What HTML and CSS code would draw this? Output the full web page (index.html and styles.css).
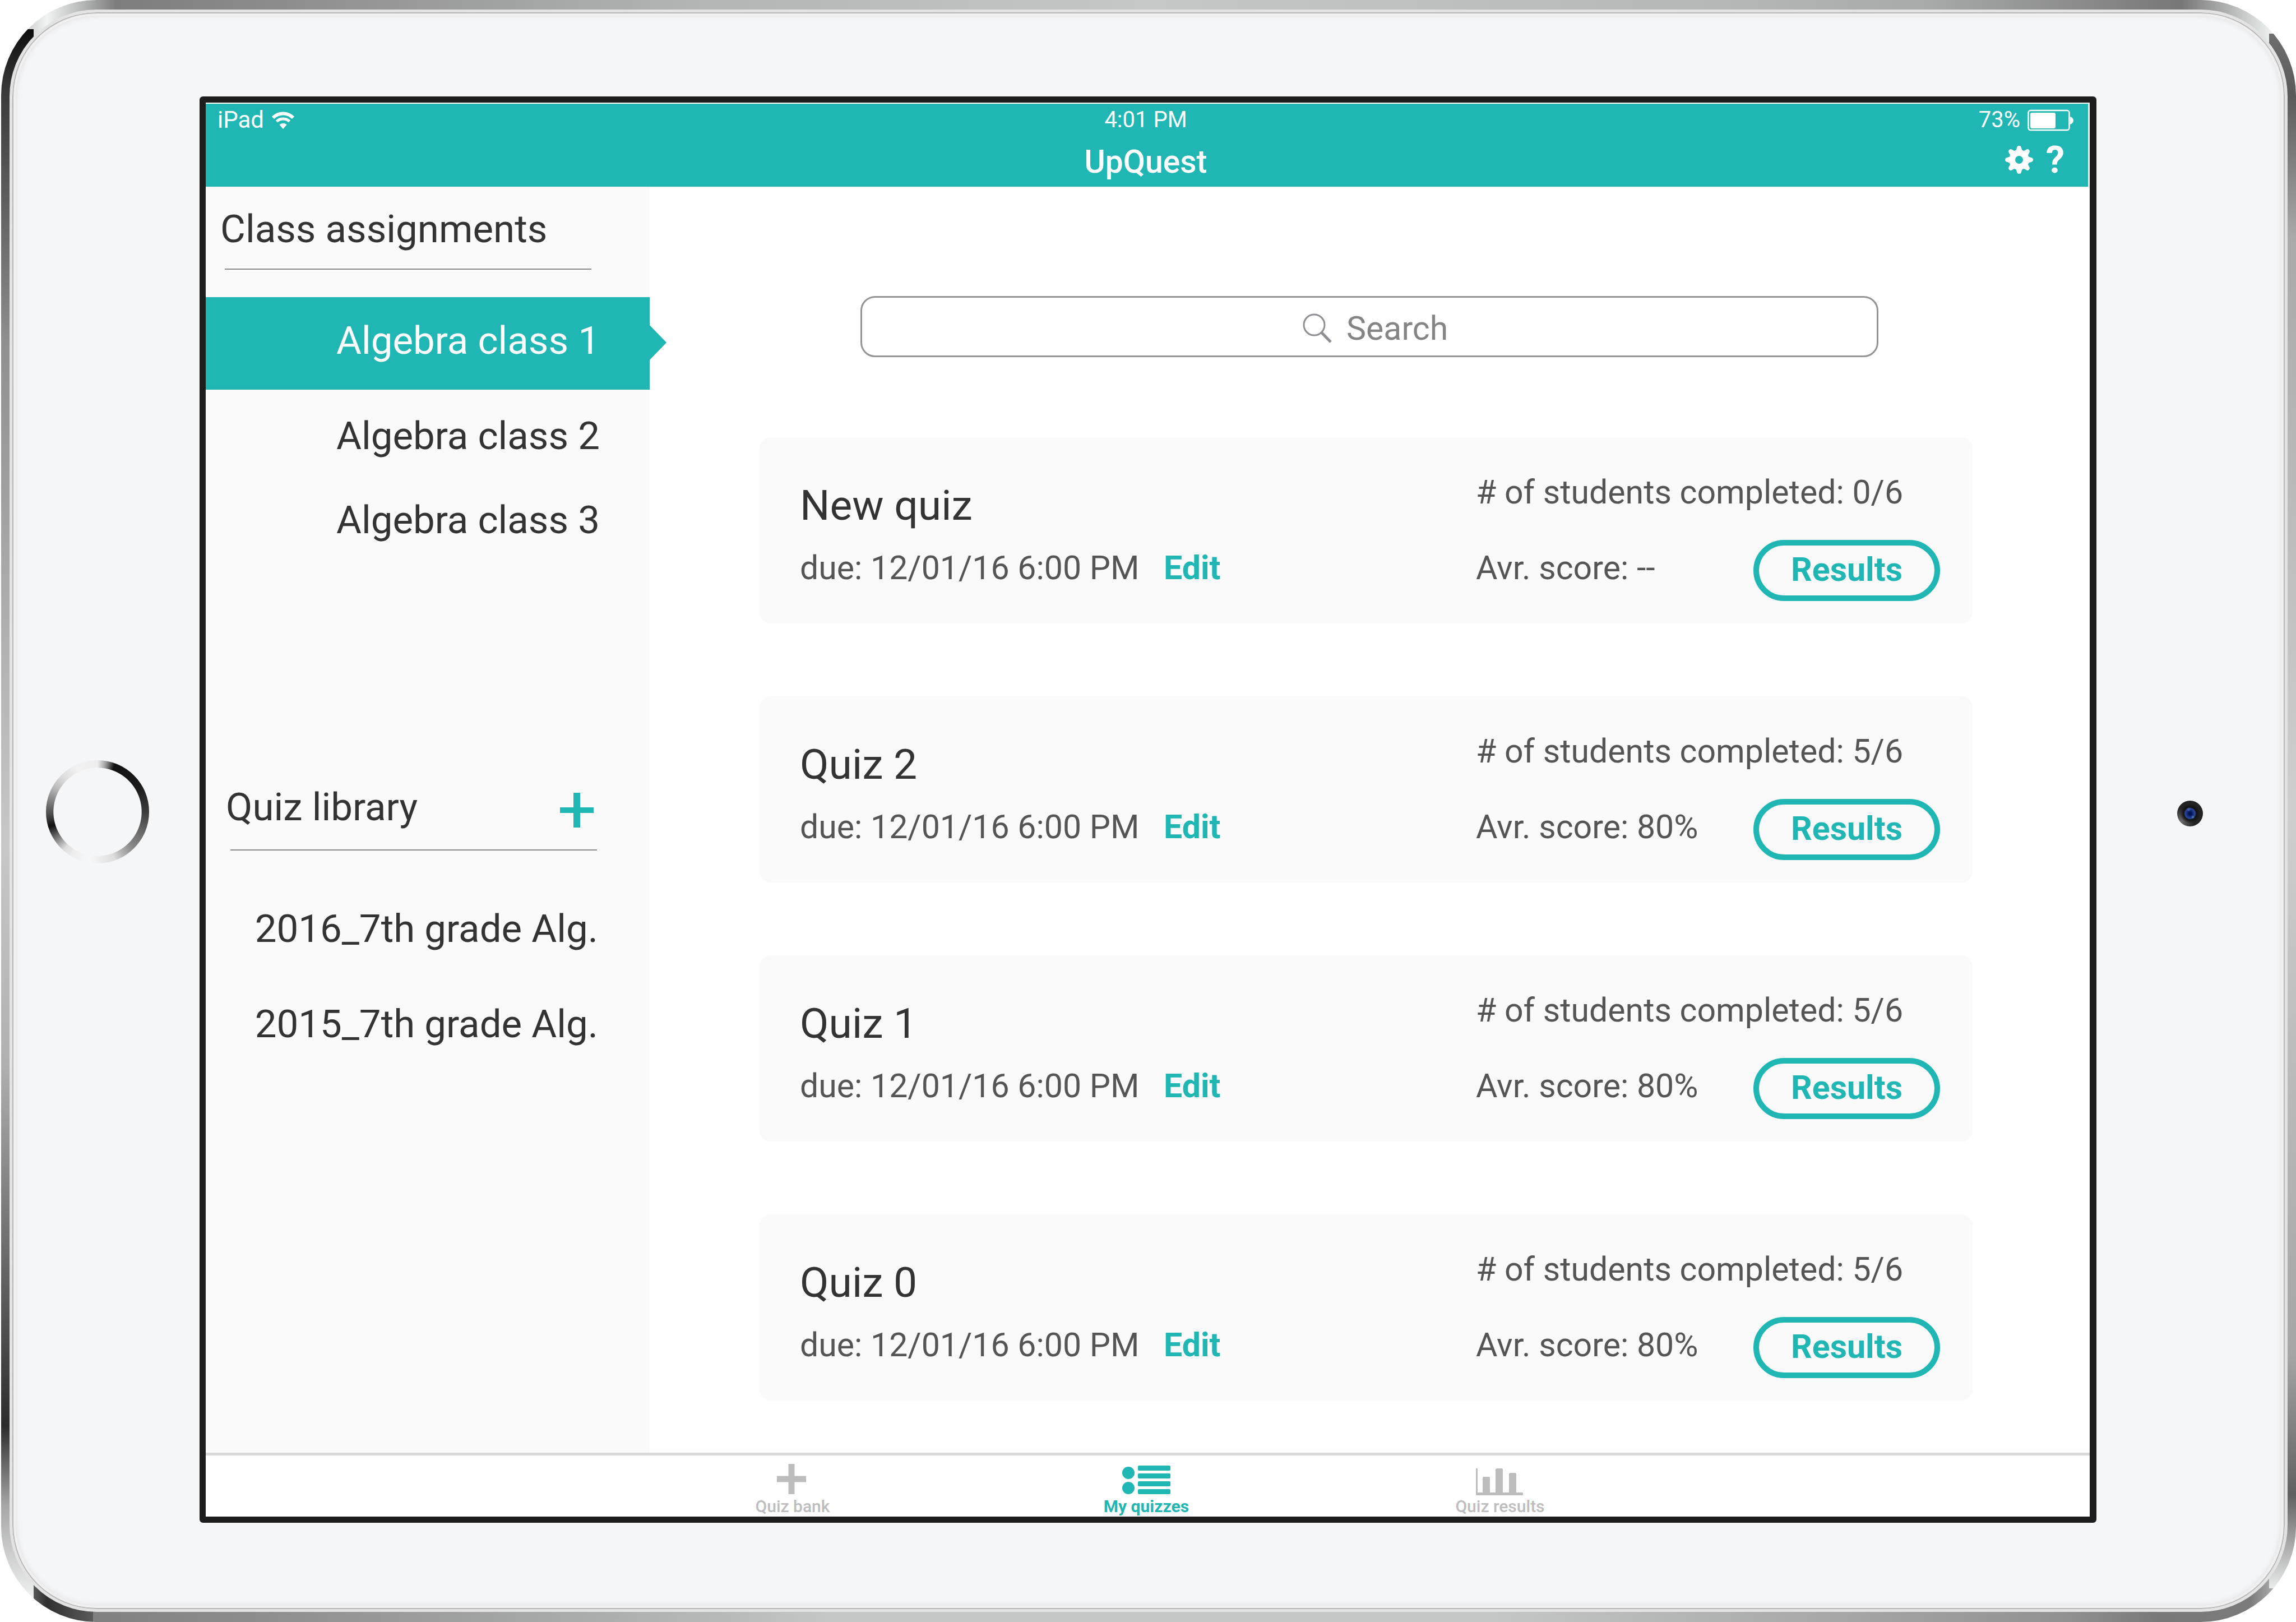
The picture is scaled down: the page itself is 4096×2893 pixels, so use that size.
FILE: index.html
```html
<!DOCTYPE html>
<html lang="en">
<head>
<meta charset="utf-8">
<title>UpQuest</title>
<link rel="stylesheet" href="styles.css">
</head>
<body>
<div class="device">
  <div class="panel">
    <button class="home-button" aria-label="Home"></button>
    <div class="screen">
      <header class="topbar">
        <div class="status-left">
          <span>iPad</span>
          <svg class="wifi" viewBox="0 0 42 32" aria-hidden="true">
            <path d="M3 12C13 2 29 2 39 12" fill="none" stroke="#fff" stroke-width="6"/>
            <path d="M9.500 18.500C16 12.500 26 12.500 32.500 18.500" fill="none" stroke="#fff" stroke-width="5"/>
            <path d="M21 32L14.500 24.500C18 21 24 21 27.500 24.500Z" fill="#fff"/>
          </svg>
        </div>
        <div class="status-time">4:01 PM</div>
        <div class="status-right">
          <span>73%</span>
          <svg class="battery" viewBox="0 0 83 39" aria-hidden="true">
            <rect x="1.500" y="2" width="73" height="35" rx="4" fill="none" stroke="#fff" stroke-width="2.500"/>
            <rect x="5" y="6" width="45" height="28" rx="3" fill="#fff"/>
            <path d="M76 13C84 16 84 24 76 27Z" fill="#fff"/>
          </svg>
        </div>
        <h1 class="app-title">UpQuest</h1>
        <div class="actions">
          <button class="icon-button" aria-label="Settings">
            <svg class="gear" viewBox="-25 -25 50 50" aria-hidden="true">
              <g fill="#fff">
                <path id="tooth" d="M-6 -15L-3.500 -23Q-3 -25 0 -25Q3 -25 3.500 -23L6 -15Z"/>
                <use href="#tooth" transform="rotate(45)"/>
                <use href="#tooth" transform="rotate(90)"/>
                <use href="#tooth" transform="rotate(135)"/>
                <use href="#tooth" transform="rotate(180)"/>
                <use href="#tooth" transform="rotate(225)"/>
                <use href="#tooth" transform="rotate(270)"/>
                <use href="#tooth" transform="rotate(315)"/>
              </g>
              <circle r="12.500" fill="none" stroke="#fff" stroke-width="11"/>
            </svg>
          </button>
          <button class="icon-button help" aria-label="Help">?</button>
        </div>
      </header>

      <div class="content">
        <nav class="sidebar">
          <h2 class="side-heading">Class assignments</h2>
          <hr class="side-rule">
          <ul class="class-list">
            <li><a class="class-link active" href="#class-1">Algebra class 1</a></li>
            <li><a class="class-link" href="#class-2">Algebra class 2</a></li>
            <li><a class="class-link" href="#class-3">Algebra class 3</a></li>
          </ul>
          <div class="library-heading">
            <h2 class="library-title">Quiz library</h2>
            <button class="icon-button" aria-label="Add to quiz library">
              <svg class="add" viewBox="0 0 60 62" aria-hidden="true"><path d="M0 31H60" stroke="#1fb6b4" stroke-width="10"/><path d="M30 0V62" stroke="#1fb6b4" stroke-width="12"/></svg>
            </button>
          </div>
          <hr class="side-rule library-rule">
          <ul class="library-list">
            <li><a class="library-link" href="#lib-2016">2016_7th grade Alg.</a></li>
            <li><a class="library-link" href="#lib-2015">2015_7th grade Alg.</a></li>
          </ul>
        </nav>

        <main class="main">
          <label class="search">
            <svg class="search-icon" viewBox="0 0 52 53" aria-hidden="true"><circle cx="20.500" cy="20.500" r="18.500" fill="none" stroke="#8e8e93" stroke-width="3"/><path d="M33.500 34L50 51" stroke="#8e8e93" stroke-width="5"/></svg>
            <input class="search-input" type="search" placeholder="Search" aria-label="Search">
          </label>
          <div class="cards">
            <article class="card">
              <div class="card-info">
                <h3 class="card-title">New quiz</h3>
                <p class="due">due: 12/01/16 6:00 PM <a class="edit" href="#edit-new">Edit</a></p>
              </div>
              <div class="card-stats">
                <p>#&nbsp;of students completed: 0/6</p>
                <div class="score-row"><p class="score">Avr. score: --</p><button class="results">Results</button></div>
              </div>
            </article>
            <article class="card">
              <div class="card-info">
                <h3 class="card-title">Quiz 2</h3>
                <p class="due">due: 12/01/16 6:00 PM <a class="edit" href="#edit-2">Edit</a></p>
              </div>
              <div class="card-stats">
                <p>#&nbsp;of students completed: 5/6</p>
                <div class="score-row"><p class="score">Avr. score: 80%</p><button class="results">Results</button></div>
              </div>
            </article>
            <article class="card">
              <div class="card-info">
                <h3 class="card-title">Quiz 1</h3>
                <p class="due">due: 12/01/16 6:00 PM <a class="edit" href="#edit-1">Edit</a></p>
              </div>
              <div class="card-stats">
                <p>#&nbsp;of students completed: 5/6</p>
                <div class="score-row"><p class="score">Avr. score: 80%</p><button class="results">Results</button></div>
              </div>
            </article>
            <article class="card">
              <div class="card-info">
                <h3 class="card-title">Quiz 0</h3>
                <p class="due">due: 12/01/16 6:00 PM <a class="edit" href="#edit-0">Edit</a></p>
              </div>
              <div class="card-stats">
                <p>#&nbsp;of students completed: 5/6</p>
                <div class="score-row"><p class="score">Avr. score: 80%</p><button class="results">Results</button></div>
              </div>
            </article>
          </div>
        </main>
      </div>

      <nav class="tabbar">
        <a class="tab" href="#bank">
          <svg class="tab-icon" viewBox="0 0 86 56" aria-hidden="true"><path d="M15 27H67" stroke="#bdbdbd" stroke-width="11"/><path d="M41 0V54" stroke="#bdbdbd" stroke-width="11"/></svg>
          <span>Quiz bank</span>
        </a>
        <a class="tab current" href="#quizzes">
          <svg class="tab-icon" viewBox="0 0 86 56" aria-hidden="true"><g fill="#1fb6b4"><circle cx="11" cy="16" r="11"/><circle cx="11" cy="43" r="11"/><rect x="28" y="3" width="58" height="9" rx="2"/><rect x="28" y="17" width="58" height="9" rx="2"/><rect x="28" y="31" width="58" height="9" rx="2"/><rect x="28" y="45" width="58" height="9" rx="2"/></g></svg>
          <span>My quizzes</span>
        </a>
        <a class="tab" href="#results">
          <svg class="tab-icon" viewBox="0 0 86 56" aria-hidden="true"><path d="M0 8H3V51H12V25Q12 23 14 23H23Q25 23 25 25V51H35V10Q35 8 37 8H46Q48 8 48 10V51H59V18Q59 16 61 16H70Q72 16 72 18V51H84V56H0Z" fill="#bdbdbd"/></svg>
          <span>Quiz results</span>
        </a>
      </nav>
    </div>
    <div class="camera"></div>
  </div>
</div>
</body>
</html>
```
FILE: styles.css
```css
* { box-sizing: border-box; }
body, h1, h2, h3, p, ul { margin: 0; padding: 0; }
body { background: #fff; font-family: Roboto, "Liberation Sans", sans-serif; color: #333; }
h1, h2, h3 { font-weight: 400; }
ul { list-style: none; }
a { color: inherit; text-decoration: none; }
button { font: inherit; color: inherit; background: none; border: 0; padding: 0; margin: 0; cursor: pointer; }
svg { display: block; flex: none; }

/* Tablet body: polished metal rim around a light panel */
.device {
  min-height: 100vh;
  display: grid;
  margin-left: 2px;
  padding: 17px 15px 18px;
  border-radius: 170px;
  background:
    linear-gradient(#0d0d0d, #3a3a3a 4%, #8f8f8f 20%, #c8c8c8 52%, #b0b0b0 66%, #2c2c2c 89%, #a5a5a5 94%, #f0f2f1) 0 52px / 58px calc(100% - 94px) no-repeat,
    linear-gradient(#6e6e6e, #5a5a5a 4%, #a9a9a9 13%, #cfcfcf 50%, #a5a5a5 85%, #606060 94%, #a5a5a5 97%, #e8ecea) 100% 60px / 48px calc(100% - 120px) no-repeat,
    linear-gradient(90deg, #ccc 1%, #f0f4f2 2%, #7d7d7d 5%, #b3b5b4 30%, #c6c8c7 50%, #b6b8b7 75%, #a8aaa9 84%, #777 95%, #b0b2b1 97%, #f0f4f2 99%) 0 0 / 100% 50% no-repeat,
    linear-gradient(90deg, #777 1%, #303030 2%, #5a5a5a 4%, #808080 4%, #939393 14%, #b8bbba 32%, #c5c7c6 36%, #c5c7c6 65%, #919191 90%, #787878 94%, #7b7b7b 98%, #aaa 99%) 0 100% / 100% 50% no-repeat;
}
.panel {
  display: grid;
  grid-template-columns: 334px minmax(0, 1fr) 336px;
  align-items: center;
  padding: 150px 0 154px;
  border: 5px solid #e3e3e3;
  border-radius: 155px;
  background: #f5f6f8;
  box-shadow: inset 0 0 0 2px #b7b7b7, inset 0 0 0 6px #f0f0f0, inset 0 0 8px 8px #e4e4e5;
}
.home-button {
  width: 184px;
  height: 184px;
  margin: 8px 0 0 60px;
  border-radius: 50%;
  background:
    radial-gradient(circle closest-side, #f5f6f8 85%, transparent 86%),
    conic-gradient(#eee, #999 10deg, #121212 20deg, #1b1b1b 60deg, #3c3c3c 90deg, #6a6a6a 115deg, #888 135deg, #b5b5b5 150deg, #ddd 160deg, #f0f0f0 180deg, #f7f8f9 190deg, #eee 210deg, #ddd 222deg, #888 235deg, #111 253deg, #444 265deg, #777 280deg, #bbb 300deg, #ddd 315deg, #f2f2f2 335deg, #eee);
}
.camera {
  width: 46px;
  height: 46px;
  margin: 14px 0 0 144px;
  border-radius: 50%;
  background:
    radial-gradient(circle at 61% 64%, #4a8fd0, transparent 3px),
    radial-gradient(circle at 45% 34%, #5068b0, transparent 4px),
    radial-gradient(circle at 50% 50%, #00104f 2px, #2a489c 9px, #222b50 10px, transparent 11px),
    radial-gradient(circle at 50% 50%, #111 11px, transparent 18px),
    radial-gradient(circle at 15% 80%, #6c6c6c, #232323 24px);
}

.screen {
  align-self: stretch;
  display: flex;
  flex-direction: column;
  border: 11px solid #1d1d1d;
  border-right-width: 12px;
  border-radius: 6px;
  background: #fff;
}

.topbar {
  display: grid;
  grid-template-columns: 1fr auto 1fr;
  row-gap: 17px;
  margin: 2px 3px 0 0;
  padding: 5px 25px 10px 21px;
  background: #1fb6b4;
  color: #fff;
  font-size: 40px;
  line-height: 48px;
}
.status-left, .status-right { display: flex; align-items: center; gap: 13px; }
.status-left { font-size: 42px; }
.status-right { justify-content: flex-end; }
.status-time { text-align: center; }
.wifi { width: 42px; height: 32px; }
.battery { width: 83px; height: 39px; }
.app-title { grid-column: 2; font-size: 57px; font-weight: 500; line-height: 68px; text-align: center; }
.actions { display: flex; justify-content: flex-end; align-items: flex-start; gap: 23px; padding-right: 17px; }
.icon-button { display: flex; align-items: center; }
.actions .icon-button { height: 60px; }
.help { font-size: 67px; font-weight: 700; line-height: 60px; }
.gear { width: 50px; height: 50px; }

.content { flex: 1; display: grid; grid-template-columns: 792px minmax(0, 1fr); }

.sidebar { padding-top: 36px; background: #fafafa; font-size: 69px; line-height: 80px; }
.side-heading, .library-title { font-size: 69px; }
.side-heading { padding: 0 26px 30px; }
.side-rule { height: 2px; margin: 0 104px 49px 34px; border: 0; background: #8a8a8a; }
.class-link { display: block; padding: 35px 89px; text-align: right; }
.class-link.active { position: relative; margin-bottom: 8px; padding: 38px 89px 47px; background: #1fb6b4; color: #fff; }
.class-link.active::after {
  content: "";
  position: absolute;
  left: 100%;
  top: 50%;
  margin-top: -33px;
  border: solid transparent;
  border-width: 31px 0 31px 30px;
  border-left-color: #1fb6b4;
}
.library-heading { display: flex; justify-content: space-between; margin-top: 397px; padding: 0 100px 35px 36px; }
.add { width: 60px; height: 62px; margin-top: 10px; }
.library-rule { margin: 0 94px 55px 44px; }
.library-link { display: block; padding: 45px 92px 45px 20px; text-align: right; white-space: nowrap; }

.main { padding: 195px 209px 90px 196px; }
.search {
  display: flex;
  align-items: center;
  gap: 26px;
  height: 109px;
  margin: 0 168px 143px 180px;
  padding: 6px 0 0 786px;
  border: 3px solid #949494;
  border-radius: 26px;
  background: #fff;
}
.search-icon { width: 52px; height: 53px; }
.search-input {
  flex: 1;
  min-width: 0;
  padding: 0;
  border: 0;
  outline: 0;
  background: none;
  font: inherit;
  font-size: 59px;
  line-height: 70px;
  color: #333;
  appearance: none;
}
.search-input::placeholder { color: #858585; opacity: 1; }

.cards { display: grid; gap: 130px; }
.card {
  display: grid;
  grid-template-columns: minmax(0, 1fr) 830px;
  min-height: 332px;
  padding: 0 58px 40px 72px;
  border-radius: 20px;
  background: #fafafa;
  color: #555;
  font-size: 59px;
  line-height: 70px;
}
.card-info { padding-top: 76px; }
.card-title { margin-bottom: 32px; font-size: 75px; line-height: 90px; color: #333; }
.edit { margin-left: 29px; font-weight: 700; color: #1fb6b4; }
.card-stats { padding: 63px 0 0 2px; }
.score-row { display: flex; justify-content: space-between; align-items: flex-start; margin-top: 50px; }
.score { padding-top: 15px; }
.results {
  width: 333px;
  height: 109px;
  padding-bottom: 4px;
  border: 10px solid #1fb6b4;
  border-radius: 55px;
  font-weight: 700;
  color: #1fb6b4;
}

.tabbar {
  display: grid;
  grid-template-columns: repeat(3, 631px);
  justify-content: center;
  padding: 15px 5px 1px 0;
  border-top: 5px solid #d9d9d9;
  color: #bdbdbd;
  font-size: 30px;
  font-weight: 500;
  line-height: 34px;
}
.tab { display: flex; flex-direction: column; align-items: center; gap: 3px; }
.tab.current { color: #1fb6b4; font-weight: 700; }
.tab-icon { width: 86px; height: 56px; }
```
